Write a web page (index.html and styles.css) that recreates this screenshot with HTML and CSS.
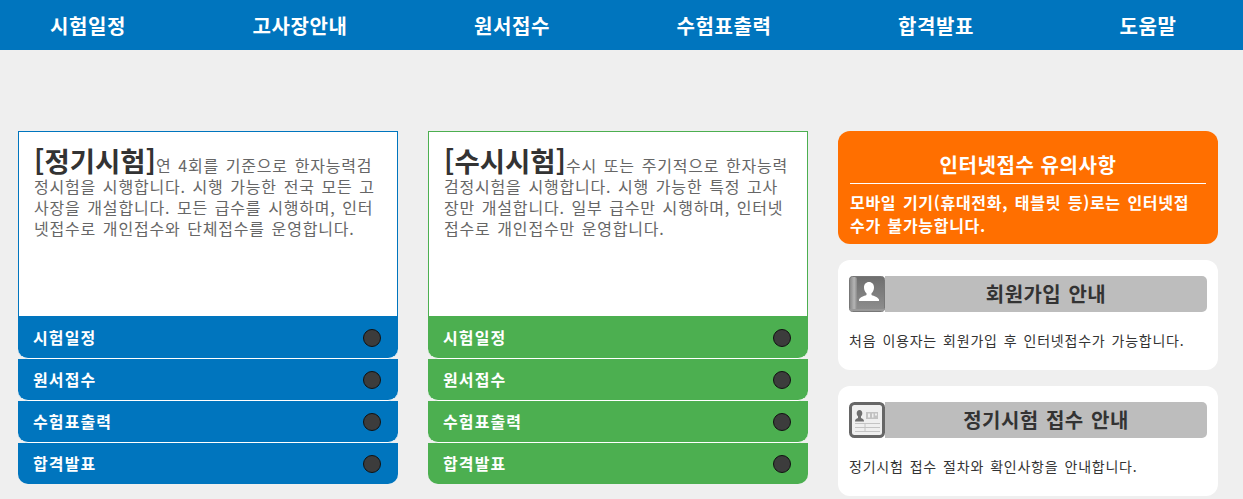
FILE: index.html
```html
<!DOCTYPE html>
<html lang="ko">
<head>
<meta charset="utf-8">
<title>인터넷접수</title>
<link rel="stylesheet" href="styles.css">
</head>
<body>
<nav class="topnav">
  <ul class="topnav-list">
    <li>시험일정</li><li>고사장안내</li><li>원서접수</li><li>수험표출력</li><li>합격발표</li><li>도움말</li>
  </ul>
</nav>
<main class="columns">
  <section class="exam exam-blue">
    <div class="exam-body"><strong class="exam-name">[정기시험]</strong>연 4회를 기준으로 한자능력검정시험을 시행합니다. 시행 가능한 전국 모든 고사장을 개설합니다. 모든 급수를 시행하며, 인터넷접수로 개인접수와 단체접수를 운영합니다.</div>
    <ul class="exam-links">
      <li>시험일정<span class="dot"></span></li>
      <li>원서접수<span class="dot"></span></li>
      <li>수험표출력<span class="dot"></span></li>
      <li>합격발표<span class="dot"></span></li>
    </ul>
  </section>
  <section class="exam exam-green">
    <div class="exam-body"><strong class="exam-name">[수시시험]</strong>수시 또는 주기적으로 한자능력검정시험을 시행합니다. 시행 가능한 특정 고사장만 개설합니다. 일부 급수만 시행하며, 인터넷접수로 개인접수만 운영합니다.</div>
    <ul class="exam-links">
      <li>시험일정<span class="dot"></span></li>
      <li>원서접수<span class="dot"></span></li>
      <li>수험표출력<span class="dot"></span></li>
      <li>합격발표<span class="dot"></span></li>
    </ul>
  </section>
  <aside class="side">
    <div class="notice">
      <h2 class="notice-title">인터넷접수 유의사항</h2>
      <p class="notice-text">모바일 기기(휴대전화, 태블릿 등)로는 인터넷접수가 불가능합니다.</p>
    </div>
    <div class="info">
      <div class="info-head">
        <svg class="info-icon" viewBox="0 0 36 36" aria-hidden="true">
          <defs>
            <linearGradient id="bookg" x1="0" y1="0" x2="0" y2="1"><stop offset="0" stop-color="#6e6e6e"/><stop offset="1" stop-color="#8f8f8f"/></linearGradient>
            <linearGradient id="spine" x1="0" y1="0" x2="1" y2="0"><stop offset="0" stop-color="#8a8a8a"/><stop offset="0.6" stop-color="#b5b5b5"/><stop offset="1" stop-color="#8a8a8a"/></linearGradient>
          </defs>
          <rect x="0.5" y="0.5" width="35" height="35" rx="3" fill="url(#bookg)" stroke="#777"/>
          <rect x="1" y="1" width="7" height="34" rx="2" fill="url(#spine)"/>
          <path d="M20 6c3 0 5 2.300 5 5.500 0 2.500-1 4.500-2.500 5.800v1.700c2.500 1.200 6.500 2 7.500 4.500v1.500H10v-1.500c1-2.500 5-3.300 7.500-4.500v-1.700C16 16 15 14 15 11.500 15 8.300 17 6 20 6z" fill="#fff"/>
          <rect x="1" y="33" width="34" height="2" fill="#999"/>
        </svg>
        <h3 class="info-title">회원가입 안내</h3>
      </div>
      <p class="info-text">처음 이용자는 회원가입 후 인터넷접수가 가능합니다.</p>
    </div>
    <div class="info">
      <div class="info-head">
        <svg class="info-icon" viewBox="0 0 36 36" aria-hidden="true">
          <rect x="1.500" y="1.500" width="33" height="33" rx="4" fill="#efefef" stroke="#666" stroke-width="3"/>
          <path d="M10.500 8c1.800 0 2.800 1.400 2.800 3.200 0 1.300-.5 2.300-1.300 3V16c1.300.7 3 1.300 3 3v.5H6V19c0-1.700 1.700-2.300 3-3v-1.800c-.8-.7-1.300-1.700-1.300-3C7.700 9.400 8.700 8 10.500 8z" fill="#6f6f6f"/>
          <rect x="17" y="10" width="12" height="7" fill="#c2c2c2"/>
          <rect x="19" y="11.500" width="2" height="4" fill="#eee"/>
          <rect x="23" y="11.500" width="1.500" height="4" fill="#eee"/>
          <rect x="26" y="11.500" width="2" height="2" fill="#eee"/>
          <path d="M6 21.500h25M6 25.500h25M6 29.500h25M16 21.500v8" stroke="#c4c4c4" fill="none"/>
        </svg>
        <h3 class="info-title">정기시험 접수 안내</h3>
      </div>
      <p class="info-text">정기시험 접수 절차와 확인사항을 안내합니다.</p>
    </div>
  </aside>
</main>
</body>
</html>
```
FILE: styles.css
```css
* { box-sizing: border-box; }
html, body { margin: 0; height: 499px; overflow: hidden; }
body {
  background: #efefef;
  font-family: "Noto Sans CJK KR", "Liberation Sans", sans-serif;
  color: #333;
}
ul { list-style: none; margin: 0; padding: 0; }
h2, h3, p { margin: 0; }

.topnav { background: #0075be; height: 50px; overflow: hidden; }
.topnav-list {
  display: grid;
  grid-template-columns: repeat(6, 212px);
  margin-left: -18px;
  height: 50px;
  align-items: center;
  color: #fff;
  font-size: 20px;
  font-weight: 700;
  letter-spacing: .6px;
  text-align: center;
}

.columns {
  display: grid;
  grid-template-columns: repeat(3, 380px);
  gap: 30px;
  padding: 81px 18px 0;
}

.exam-body {
  height: 185px;
  background: #fff;
  border: 1px solid;
  border-bottom: 0;
  padding: 13px 15px 0;
  font-size: 16px;
  line-height: 21px;
  letter-spacing: .8px;
  word-spacing: 1.5px;
  color: #666;
  word-break: break-all;
}
.exam-name { font-size: 27.5px; line-height: 30px; letter-spacing: 0; color: #333; font-weight: 700; }
.exam-blue .exam-body { border-color: #0075be; }
.exam-green .exam-body { border-color: #4caf50; }

.exam-links li {
  display: flex;
  align-items: center;
  justify-content: space-between;
  height: 42px;
  padding: 0 17px 2px 15px;
  border-bottom: 1px solid #fff;
  border-radius: 0 0 10px 10px;
  color: #fff;
  font-size: 16px;
  font-weight: 700;
  letter-spacing: 1.1px;
}
.exam-links li:first-child { height: 43px; padding-top: 1px; }
.exam-links li:last-child { border-bottom: 0; height: 41px; }
.exam-blue li { background: #0075be; }
.exam-green li { background: #4caf50; }
.dot {
  width: 18px;
  height: 18px;
  margin-top: 3px;
  border-radius: 50%;
  background: #3c3c3c;
  border: 1px solid #111;
}

.side { display: flex; flex-direction: column; gap: 16px; }
.notice {
  height: 113px;
  background: #ff6f00;
  border-radius: 12px;
  padding: 20px 12px 0;
  color: #fff;
  font-weight: 700;
}
.notice-title {
  font-size: 20px;
  line-height: 27px;
  letter-spacing: .6px;
  text-align: center;
  padding-bottom: 5px;
  border-bottom: 1px solid #fff;
}
.notice-text {
  font-size: 16px;
  line-height: 23px;
  letter-spacing: .7px;
  word-spacing: 1.5px;
  margin-top: 7px;
  padding-right: 4px;
  word-break: break-all;
}

.info {
  height: 110px;
  background: #fff;
  border-radius: 12px;
  padding: 16px 11px 0;
}
.info-head { display: flex; height: 36px; }
.info-icon { width: 36px; height: 36px; flex: none; display: block; }
.info-title {
  flex: 1;
  background: #bdbdbd;
  border-radius: 0 5px 5px 0;
  text-align: center;
  font-size: 20px;
  line-height: 36px;
  letter-spacing: .4px;
  word-spacing: 1.5px;
  font-weight: 700;
}
.info-text {
  margin-top: 18px;
  font-size: 14px;
  line-height: 20px;
  letter-spacing: .75px;
  word-spacing: 1.5px;
  color: #333;
}
```
